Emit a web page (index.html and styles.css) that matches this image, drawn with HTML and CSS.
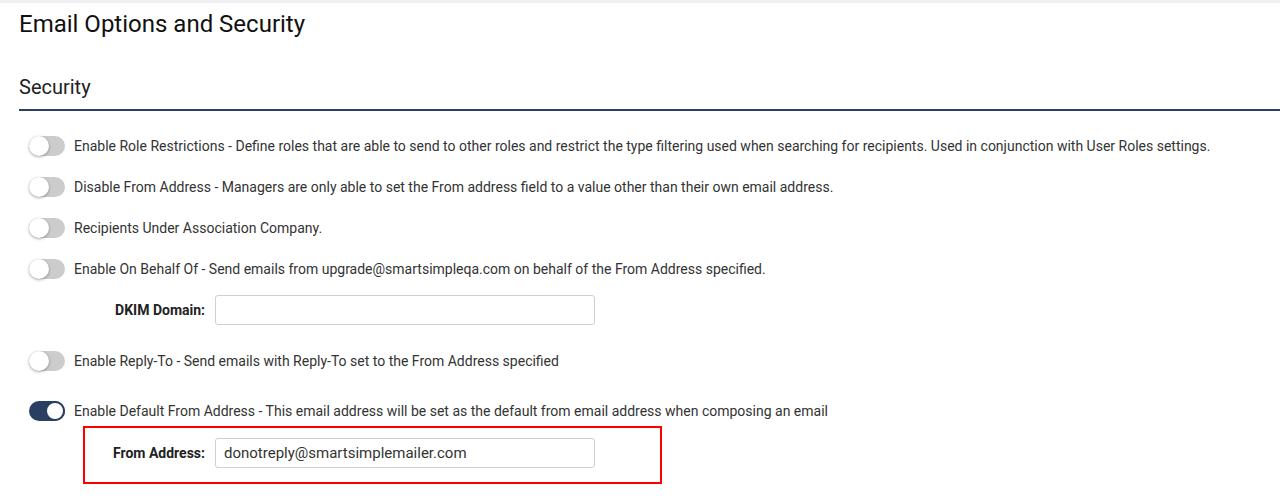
FILE: index.html
```html
<!DOCTYPE html>
<html>
<head>
<meta charset="utf-8">
<link rel="stylesheet" href="styles.css">
</head>
<body>
<div class="topbar"></div>
<main class="page">
  <h1 class="title">Email Options and Security</h1>
  <h2 class="section">Security</h2>
  <div class="options">
    <div class="opt">
      <span class="toggle"><span class="knob"></span></span>
      <span class="label">Enable Role Restrictions - Define roles that are able to send to other roles and restrict the type filtering used when searching for recipients. Used in conjunction with User Roles settings.</span>
    </div>
    <div class="opt">
      <span class="toggle"><span class="knob"></span></span>
      <span class="label">Disable From Address - Managers are only able to set the From address field to a value other than their own email address.</span>
    </div>
    <div class="opt">
      <span class="toggle"><span class="knob"></span></span>
      <span class="label">Recipients Under Association Company.</span>
    </div>
    <div class="opt">
      <span class="toggle"><span class="knob"></span></span>
      <span class="label">Enable On Behalf Of - Send emails from upgrade@smartsimpleqa.com on behalf of the From Address specified.</span>
    </div>
    <div class="field dkim">
      <span class="flabel">DKIM Domain:</span>
      <span class="input"></span>
    </div>
    <div class="opt reply">
      <span class="toggle"><span class="knob"></span></span>
      <span class="label">Enable Reply-To - Send emails with Reply-To set to the From Address specified</span>
    </div>
    <div class="opt deflt">
      <span class="toggle on"><span class="knob"></span></span>
      <span class="label">Enable Default From Address - This email address will be set as the default from email address when composing an email</span>
    </div>
    <div class="highlight">
      <div class="field">
        <span class="flabel">From Address:</span>
        <span class="input">donotreply@smartsimplemailer.com</span>
      </div>
    </div>
  </div>
</main>
</body>
</html>
```

FILE: styles.css
```css
* { box-sizing: border-box; }
html, body { margin: 0; padding: 0; background: #fff; }
body {
  font-family: Roboto, "Liberation Sans", Arial, sans-serif;
  color: #333;
  width: 1280px;
  height: 500px;
  overflow: hidden;
}
.topbar { height: 3px; background: #eef0f3; }
.page { padding-left: 19px; }
.title {
  margin: 0;
  padding-top: 6px;
  font-size: 24px;
  font-weight: 400;
  line-height: 30px;
  color: #111;
}
.section {
  margin: 0;
  margin-top: 36px;
  font-size: 20px;
  font-weight: 400;
  line-height: 24px;
  color: #222;
  padding-bottom: 10px;
  border-bottom: 2px solid #2b3f63;
}
.options {
  padding-left: 10px;
  padding-top: 25px;
  display: flex;
  flex-direction: column;
}
.opt {
  display: flex;
  align-items: center;
  gap: 9px;
  height: 20px;
  margin-bottom: 21px;
  font-size: 14px;
  color: #333;
}
.opt.reply { margin-top: 5px; margin-bottom: 30px; }
.opt.deflt { margin-bottom: 5px; }
.toggle {
  position: relative;
  flex: none;
  width: 36px;
  height: 20px;
  border-radius: 10px;
  background: #cccccc;
}
.toggle .knob {
  position: absolute;
  top: 0;
  left: 0;
  width: 20px;
  height: 20px;
  border-radius: 50%;
  background: #fff;
  box-shadow: 0 1px 3px rgba(0,0,0,0.35);
}
.toggle.on { background: #2b3f63; }
.toggle.on .knob { left: 16px; border: 2px solid #2b3f63; box-shadow: none; }
.field {
  display: flex;
  align-items: center;
  gap: 10px;
  height: 30px;
  font-size: 14px;
}
.dkim { margin-top: -5px; margin-bottom: 21px; }
.flabel {
  width: 176px;
  text-align: right;
  font-weight: 700;
  color: #222;
}
.input {
  width: 380px;
  height: 30px;
  border: 1px solid #cfcfcf;
  border-radius: 3px;
  background: #fff;
  padding: 0 8px;
  line-height: 28px;
  font-size: 15px;
  color: #333;
}
.highlight {
  margin-left: 54px;
  width: 579px;
  height: 58px;
  border: 2px solid #ff0000;
  padding-top: 10px;
}
.highlight .field { margin-left: -56px; }
```
